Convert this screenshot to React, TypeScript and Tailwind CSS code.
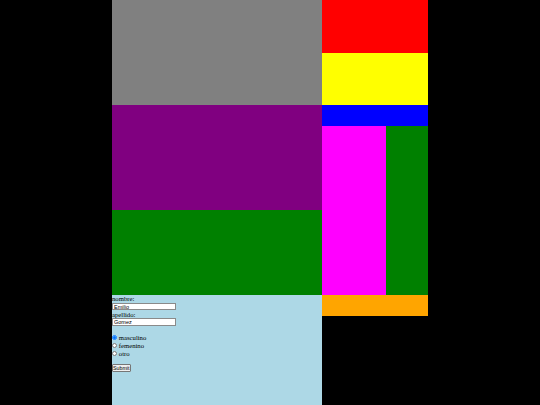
export default function App() {
  return (
    <div className="min-h-[405px] h-screen bg-black overflow-hidden">
      <div className="w-[316px] mx-auto grid grid-cols-[210px_106px]">
        {/* columna izquierda */}
        <div className="flex flex-col">
          <div className="h-[105px] bg-[#808080]"></div>
          <div className="h-[105px] bg-[#800080]"></div>
          <div className="h-[85px] bg-[#008000]"></div>
          <form
            className="h-[120px] bg-[#add8e6] text-black text-[6.7px] leading-[7.5px]"
            style={{ fontFamily: '"Liberation Serif", "Times New Roman", serif' }}
            onSubmit={e => e.preventDefault()}
          >
            <div className="h-[7.5px]">nombre:</div>
            <div className="h-[8px] flex items-center">
              <input
                type="text"
                defaultValue="Emilio"
                className="w-[64px] h-[7.8px] bg-white border-[0.5px] border-[#8a8a8a] px-[1px] text-[5.5px] leading-[5.5px] outline-none"
                style={{ fontFamily: '"Liberation Sans", Arial, sans-serif' }}
              />
            </div>
            <div className="h-[7.5px]">apellido:</div>
            <div className="h-[8px] flex items-center">
              <input
                type="text"
                defaultValue="Gomez"
                className="w-[64px] h-[7.8px] bg-white border-[0.5px] border-[#8a8a8a] px-[1px] text-[5.5px] leading-[5.5px] outline-none"
                style={{ fontFamily: '"Liberation Sans", Arial, sans-serif' }}
              />
            </div>
            <div className="h-[7.3px]"></div>
            <label className="h-[8px] flex items-center">
              <input type="radio" name="genero" defaultChecked className="w-[4.8px] h-[4.8px] m-0 mr-[2px]" />
              masculino
            </label>
            <label className="h-[8px] flex items-center">
              <input type="radio" name="genero" className="w-[4.8px] h-[4.8px] m-0 mr-[2px]" />
              femenino
            </label>
            <label className="h-[8px] flex items-center">
              <input type="radio" name="genero" className="w-[4.8px] h-[4.8px] m-0 mr-[2px]" />
              otro
            </label>
            <div className="h-[7px]"></div>
            <div className="h-[8px] flex items-center">
              <button
                type="submit"
                className="h-[8px] w-[18.5px] bg-[#efefef] border-[0.5px] border-[#767676] rounded-[1px] text-[5.3px] leading-[5.3px]"
                style={{ fontFamily: '"Liberation Sans", Arial, sans-serif' }}
              >
                Submit
              </button>
            </div>
          </form>
        </div>

        {/* columna derecha */}
        <div className="flex flex-col">
          <div className="h-[52.5px] bg-[#ff0000]"></div>
          <div className="h-[52.5px] bg-[#ffff00]"></div>
          <div className="h-[21px] bg-[#0000ff]"></div>
          <div className="h-[169px] flex">
            <div className="w-[64px] bg-[#ff00ff]"></div>
            <div className="flex-1 bg-[#008000]"></div>
          </div>
          <div className="h-[21px] bg-[#ffa500]"></div>
        </div>
      </div>
    </div>
  )
}
